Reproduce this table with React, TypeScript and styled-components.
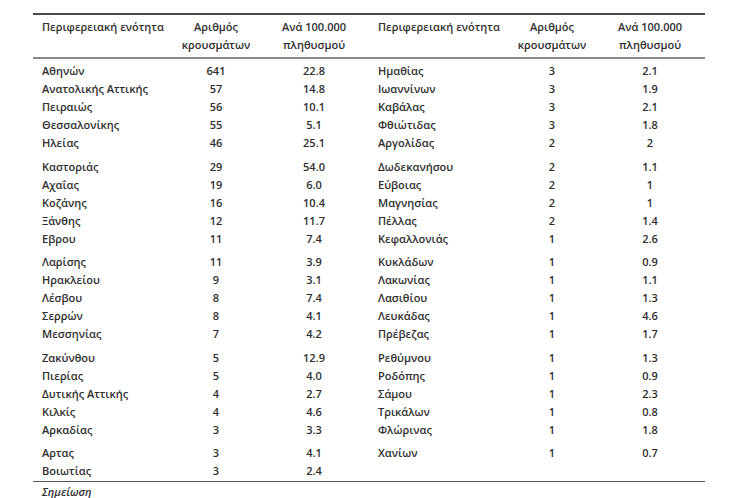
import React from "react";
import styled, { createGlobalStyle } from "styled-components";

type Row = [string, string, string];

const leftGroups: Row[][] = [
  [
    ["Αθηνών", "641", "22.8"],
    ["Ανατολικής Αττικής", "57", "14.8"],
    ["Πειραιώς", "56", "10.1"],
    ["Θεσσαλονίκης", "55", "5.1"],
    ["Ηλείας", "46", "25.1"],
  ],
  [
    ["Καστοριάς", "29", "54.0"],
    ["Αχαΐας", "19", "6.0"],
    ["Κοζάνης", "16", "10.4"],
    ["Ξάνθης", "12", "11.7"],
    ["Εβρου", "11", "7.4"],
  ],
  [
    ["Λαρίσης", "11", "3.9"],
    ["Ηρακλείου", "9", "3.1"],
    ["Λέσβου", "8", "7.4"],
    ["Σερρών", "8", "4.1"],
    ["Μεσσηνίας", "7", "4.2"],
  ],
  [
    ["Ζακύνθου", "5", "12.9"],
    ["Πιερίας", "5", "4.0"],
    ["Δυτικής Αττικής", "4", "2.7"],
    ["Κιλκίς", "4", "4.6"],
    ["Αρκαδίας", "3", "3.3"],
  ],
  [
    ["Αρτας", "3", "4.1"],
    ["Βοιωτίας", "3", "2.4"],
  ],
];

const rightGroups: Row[][] = [
  [
    ["Ημαθίας", "3", "2.1"],
    ["Ιωαννίνων", "3", "1.9"],
    ["Καβάλας", "3", "2.1"],
    ["Φθιώτιδας", "3", "1.8"],
    ["Αργολίδας", "2", "2"],
  ],
  [
    ["Δωδεκανήσου", "2", "1.1"],
    ["Εύβοιας", "2", "1"],
    ["Μαγνησίας", "2", "1"],
    ["Πέλλας", "2", "1.4"],
    ["Κεφαλλονιάς", "1", "2.6"],
  ],
  [
    ["Κυκλάδων", "1", "0.9"],
    ["Λακωνίας", "1", "1.1"],
    ["Λασιθίου", "1", "1.3"],
    ["Λευκάδας", "1", "4.6"],
    ["Πρέβεζας", "1", "1.7"],
  ],
  [
    ["Ρεθύμνου", "1", "1.3"],
    ["Ροδόπης", "1", "0.9"],
    ["Σάμου", "1", "2.3"],
    ["Τρικάλων", "1", "0.8"],
    ["Φλώρινας", "1", "1.8"],
  ],
  [["Χανίων", "1", "0.7"]],
];

const GlobalStyle = createGlobalStyle`
  html, body {
    margin: 0;
    background: #ffffff;
  }
  body {
    font-family: "Open Sans", "Noto Sans", sans-serif;
    color: #2e2e2e;
  }
`;

const Page = styled.div`
  padding: 13px 0 0 33px;
`;

const Table = styled.div`
  width: 672px;
  border-top: 2px solid #4a4a4a;
  border-bottom: 1.5px solid #555;
`;

const HeaderBar = styled.div`
  display: flex;
  padding: 3px 0;
  border-bottom: 2px solid #8a8a8a;
`;

const Body = styled.div`
  display: flex;
  padding: 3px 0 0.5px 0;
`;

const Half = styled.div`
  width: 336px;
  display: flex;
  flex-direction: column;
  gap: 5.5px;
`;

const Grid = styled.div`
  display: grid;
  grid-template-columns: 140px 86px 1fr;
  font-size: 11px;
  font-weight: 600;
  line-height: 18px;
`;

const Group = styled.div`
  display: flex;
  flex-direction: column;
`;

const Name = styled.div`
  padding-left: 9px;
  white-space: nowrap;
`;

const Num = styled.div`
  text-align: center;
  white-space: nowrap;
`;

const Note = styled.div`
  padding: 1px 0 0 9px;
  font-size: 11px;
  font-weight: 600;
  line-height: 18px;
  font-style: italic;
`;

const HalfHeader = () => (
  <Half>
    <Grid>
      <Name>Περιφερειακή ενότητα</Name>
      <Num>
        Αριθμός
        <br />
        κρουσμάτων
      </Num>
      <Num>
        Ανά 100.000
        <br />
        πληθυσμού
      </Num>
    </Grid>
  </Half>
);

const HalfBody = ({ groups }: { groups: Row[][] }) => (
  <Half>
    {groups.map((g, i) => (
      <Group key={i}>
        {g.map(([name, count, rate]) => (
          <Grid key={name}>
            <Name>{name}</Name>
            <Num>{count}</Num>
            <Num>{rate}</Num>
          </Grid>
        ))}
      </Group>
    ))}
  </Half>
);

const App: React.FunctionComponent<{}> = () => (
  <>
    <GlobalStyle />
    <Page>
      <Table>
        <HeaderBar>
          <HalfHeader />
          <HalfHeader />
        </HeaderBar>
        <Body>
          <HalfBody groups={leftGroups} />
          <HalfBody groups={rightGroups} />
        </Body>
      </Table>
      <Note>Σημείωση</Note>
    </Page>
  </>
);

export default App;
